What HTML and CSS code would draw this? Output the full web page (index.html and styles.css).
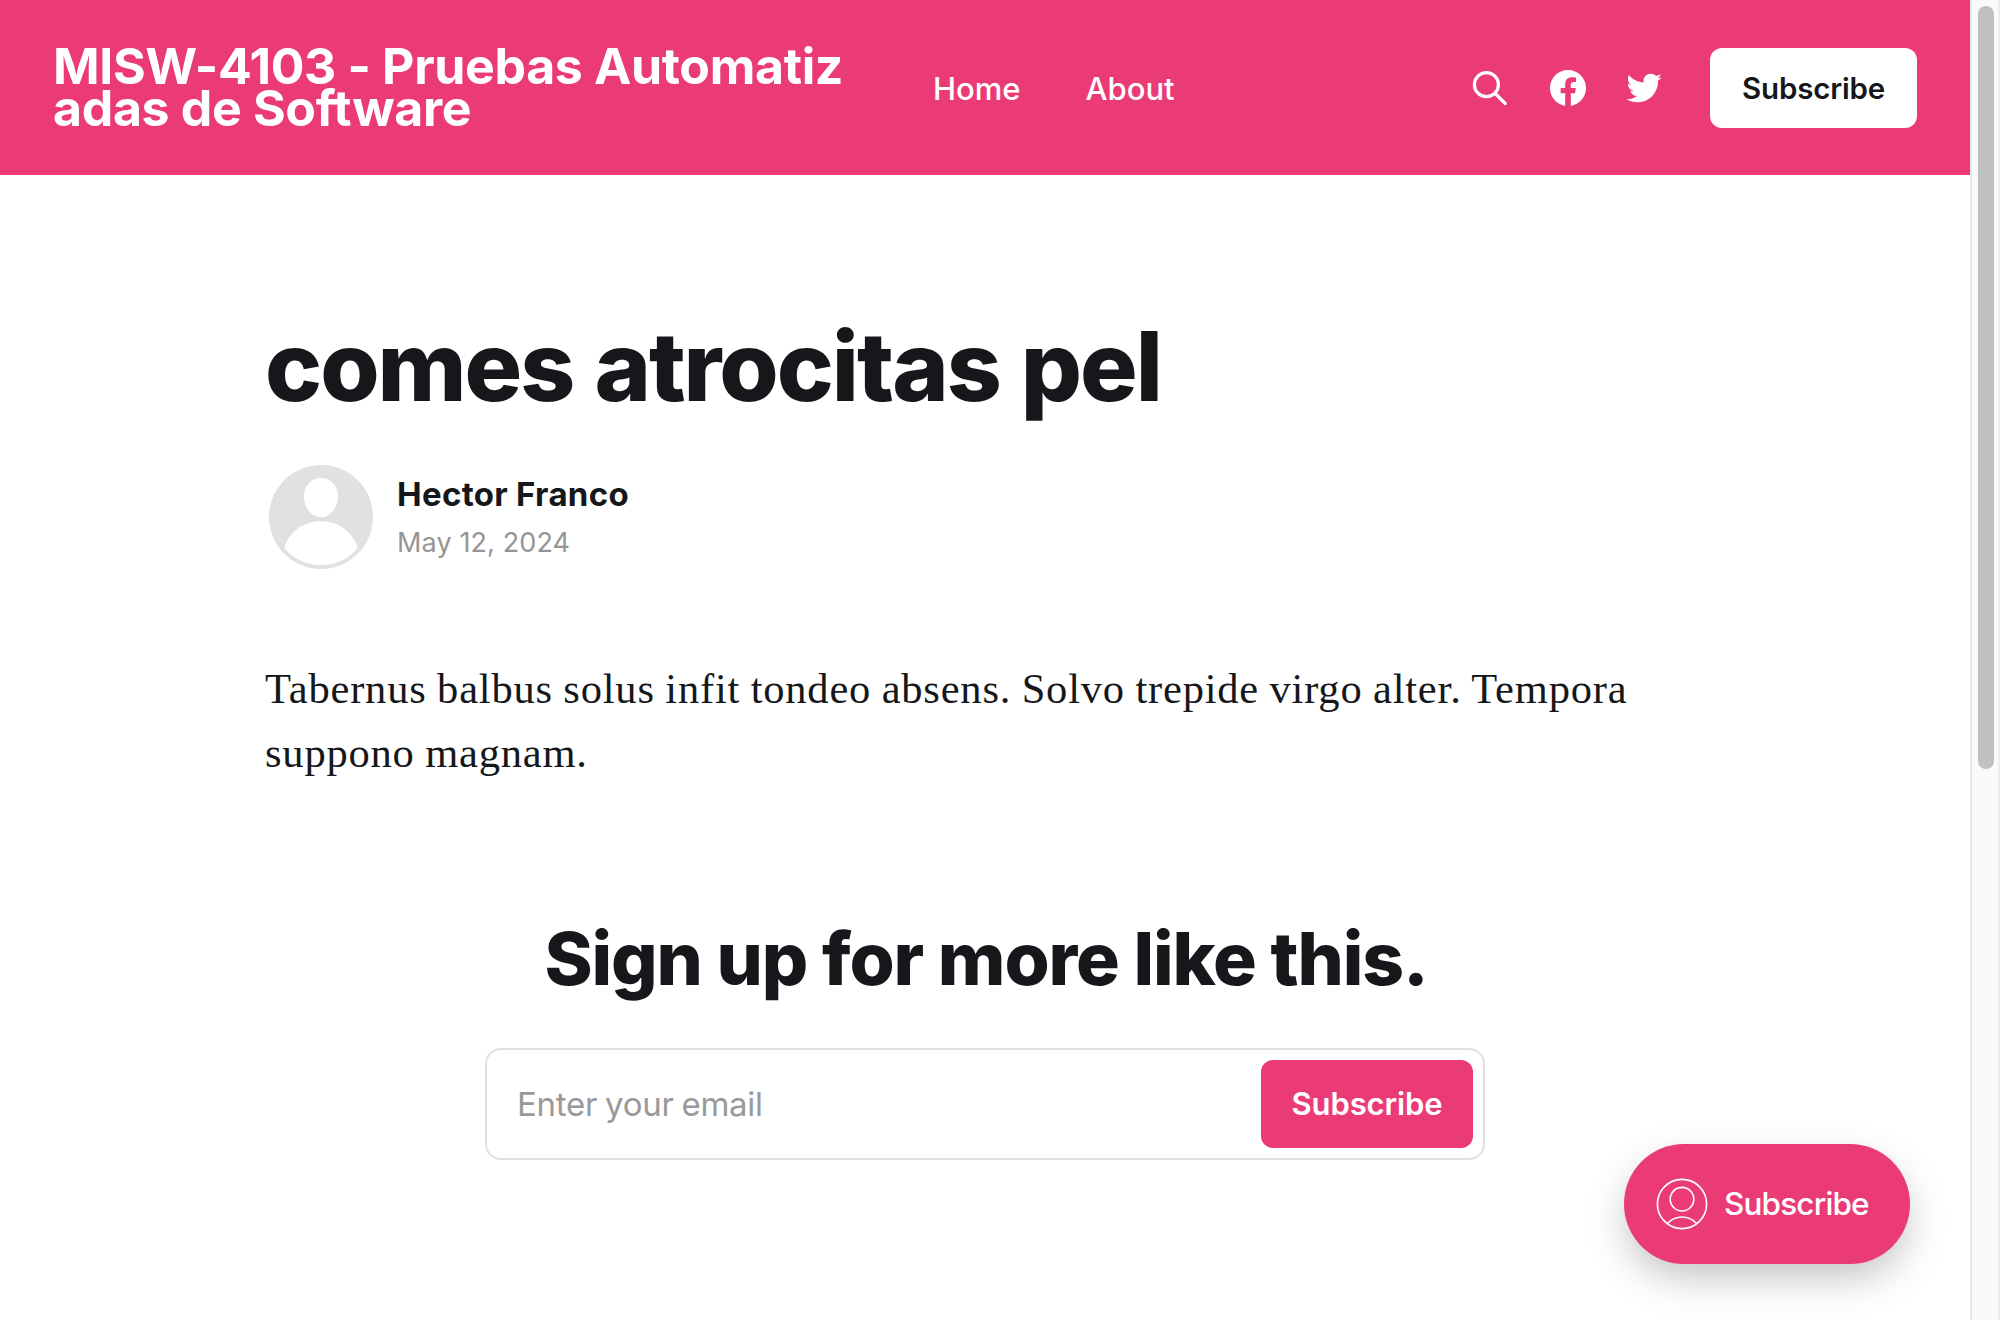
FILE: index.html
```html
<!DOCTYPE html>
<html lang="es">
<head>
<meta charset="utf-8">
<title>comes atrocitas pel</title>
<link rel="stylesheet" href="styles.css">
</head>
<body>
<div class="page">
  <header class="header">
    <a class="logo">MISW-4103 - Pruebas Automatiz<br>adas de Software</a>
    <nav class="nav"><a>Home</a><a>About</a></nav>
    <div class="actions">
      <svg class="icon-search" viewBox="0 0 40 40"><circle cx="16.4" cy="16.7" r="12"/><path d="M25.200 25.500L35.200 35.500"/></svg>
      <svg class="icon-facebook" viewBox="0 0 24 24"><path d="M24 12.073c0-6.627-5.373-12-12-12s-12 5.373-12 12c0 5.99 4.388 10.954 10.125 11.854v-8.385H7.078v-3.47h3.047V9.43c0-3.007 1.792-4.669 4.533-4.669 1.312 0 2.686.235 2.686.235v2.953H15.83c-1.491 0-1.956.925-1.956 1.874v2.25h3.328l-.532 3.47h-2.796v8.385C19.612 23.027 24 18.062 24 12.073z"/></svg>
      <svg class="icon-twitter" viewBox="0 0 32 32"><path d="M30.063 7.313c-.813 1.125-1.75 2.125-2.875 2.938v.75c0 1.563-.188 3.125-.688 4.625a15.088 15.088 0 0 1-2.063 4.438c-.875 1.438-2 2.688-3.25 3.813a15.015 15.015 0 0 1-4.625 2.563c-1.813.688-3.75 1-5.75 1-3.25 0-6.188-.875-8.875-2.625.438.063.875.125 1.375.125 2.688 0 5.063-.875 7.188-2.5-1.25 0-2.375-.375-3.375-1.125s-1.688-1.688-2.063-2.875c.438.063.813.125 1.125.125.5 0 1-.063 1.5-.25-1.313-.25-2.438-.938-3.313-1.938a5.673 5.673 0 0 1-1.313-3.688v-.063c.813.438 1.688.688 2.625.688a5.228 5.228 0 0 1-1.875-2c-.5-.875-.688-1.813-.688-2.75 0-1.063.25-2.063.75-2.938 1.438 1.75 3.188 3.188 5.25 4.25s4.313 1.688 6.688 1.813a5.579 5.579 0 0 1 1.5-5.438c1.125-1.125 2.5-1.688 4.125-1.688s3.063.625 4.188 1.813a11.48 11.48 0 0 0 3.688-1.375c-.438 1.375-1.313 2.438-2.563 3.188 1.125-.125 2.188-.438 3.313-.875z"/></svg>
      <a class="header-button">Subscribe</a>
    </div>
  </header>
  <main class="article">
    <h1 class="title">comes atrocitas pel</h1>
    <div class="byline">
      <svg class="avatar" viewBox="0 0 104 104"><circle cx="52" cy="52" r="52"/><path class="avatar-figure" d="M52 13c9.500 0 17 7.500 17 18.500C69 43 61 52.300 52 52.300S35 43 35 31.500C35 20.500 42.500 13 52 13zM15.200 82.500C21 66 35 56.200 52 56.200S83 66 88.800 82.500C80.500 93.800 67 100.200 52 100.200S23.500 93.800 15.200 82.500z"/></svg>
      <div class="byline-text"><span class="author">Hector Franco</span><time class="date">May 12, 2024</time></div>
    </div>
    <p class="body">Tabernus balbus solus infit tondeo absens. Solvo trepide virgo alter. Tempora<br>suppono magnam.</p>
  </main>
  <section class="signup">
    <h2 class="signup-title">Sign up for more like this.</h2>
    <div class="form"><span class="placeholder">Enter your email</span><a class="form-button">Subscribe</a></div>
  </section>
</div>
<div class="scrollbar"><div class="thumb"></div></div>
<a class="portal"><svg class="portal-icon" viewBox="0 0 52 52"><circle cx="26" cy="26" r="24.600"/><circle cx="26" cy="21.200" r="11.800"/><path d="M11.500 45.500C15.500 41 20.500 39 26 39s10.500 2 14.500 6.500"/></svg><span>Subscribe</span></a>
</body>
</html>
```
FILE: styles.css
```css
* { box-sizing: border-box; }
body {
  margin: 0;
  width: 2000px;
  height: 1320px;
  display: flex;
  overflow: hidden;
  background: #fff;
  color: #15171a;
  font-family: Inter, "Liberation Sans", sans-serif;
}
.page { width: 1970px; }
.header {
  height: 175px;
  padding: 0 53px;
  display: flex;
  align-items: center;
  background: #eb3b76;
  color: #fff;
}
.logo { width: 880px; padding-bottom: 1px; font-size: 50px; font-weight: 700; line-height: 42px; letter-spacing: -0.33px; white-space: nowrap; }
.nav { display: flex; gap: 65px; padding-top: 3px; font-size: 31px; font-weight: 500; line-height: 40px; }
.actions { margin-left: auto; display: flex; align-items: center; }
.actions svg { fill: #fff; }
.actions .icon-search { width: 40px; height: 40px; margin-right: 40px; fill: none; stroke: #fff; stroke-width: 3.2; stroke-linecap: round; }
.icon-facebook { width: 36px; height: 36px; margin-right: 38px; }
.icon-twitter { width: 40px; height: 40px; margin-right: 46px; }
.header-button {
  width: 207px; height: 80px;
  display: flex; align-items: center; justify-content: center;
  border-radius: 12px;
  background: #fff; color: #15171a;
  font-size: 29.5px; font-weight: 600; letter-spacing: -0.2px;
}
.article { padding: 136px 265px 0; }
.title { margin: 0; font-size: 96px; font-weight: 800; line-height: 110px; letter-spacing: -2px; word-spacing: 2.2px; white-space: nowrap; }
.byline { display: flex; gap: 24px; margin-top: 44px; padding-left: 4px; }
.avatar { width: 104px; height: 104px; fill: #e1e1e1; }
.avatar .avatar-figure { fill: #fff; }
.byline-text { display: flex; flex-direction: column; padding-top: 7px; }
.author { font-size: 33px; font-weight: 700; line-height: 44px; letter-spacing: 0.3px; }
.date { font-size: 27px; line-height: 48px; padding-top: 3px; color: #959595; letter-spacing: 0.12px; }
.body { margin: 88px 0 0; font-family: "Liberation Serif", serif; font-size: 42.5px; line-height: 64px; letter-spacing: 0.8px; word-spacing: -0.9px; white-space: nowrap; }
.signup { padding-top: 134px; display: flex; flex-direction: column; align-items: center; }
.signup-title { margin: 0; padding-left: 2px; font-size: 73px; font-weight: 800; line-height: 80px; letter-spacing: -1.15px; white-space: nowrap; }
.form {
  width: 1000px; height: 112px; margin-top: 49px; padding: 0 10px 0 30px;
  display: flex; align-items: center; justify-content: space-between;
  border: 2px solid #e1e1e1; border-radius: 16px;
}
.placeholder { font-size: 33px; letter-spacing: -0.26px; word-spacing: -1.2px; color: #999; }
.form-button {
  width: 212px; height: 88px; padding-bottom: 1px;
  display: flex; align-items: center; justify-content: center;
  border-radius: 12px; background: #eb3b76; color: #fff;
  font-size: 31px; font-weight: 600; letter-spacing: -0.12px;
}
.scrollbar { width: 30px; height: 1320px; padding: 6px 4px 0 6px; background: #fafafa; border-left: 2px solid #e8e8e8; border-right: 2px solid #ededed; }
.thumb { width: 16px; height: 763px; border-radius: 8px; background: #c1c1c1; }
.portal {
  position: absolute; left: 1624px; top: 1144px;
  width: 286px; height: 120px; padding-left: 32px;
  display: flex; align-items: center; gap: 16px;
  border-radius: 60px; background: #eb3b76; color: #fff;
  box-shadow: 0 16px 40px -4px rgba(0, 0, 0, 0.25);
  font-size: 31.5px; font-weight: 500; letter-spacing: -0.85px;
}
.portal span { padding-bottom: 1px; }
.portal-icon { width: 52px; height: 52px; fill: none; stroke: #fff; stroke-width: 1.6; }
```
